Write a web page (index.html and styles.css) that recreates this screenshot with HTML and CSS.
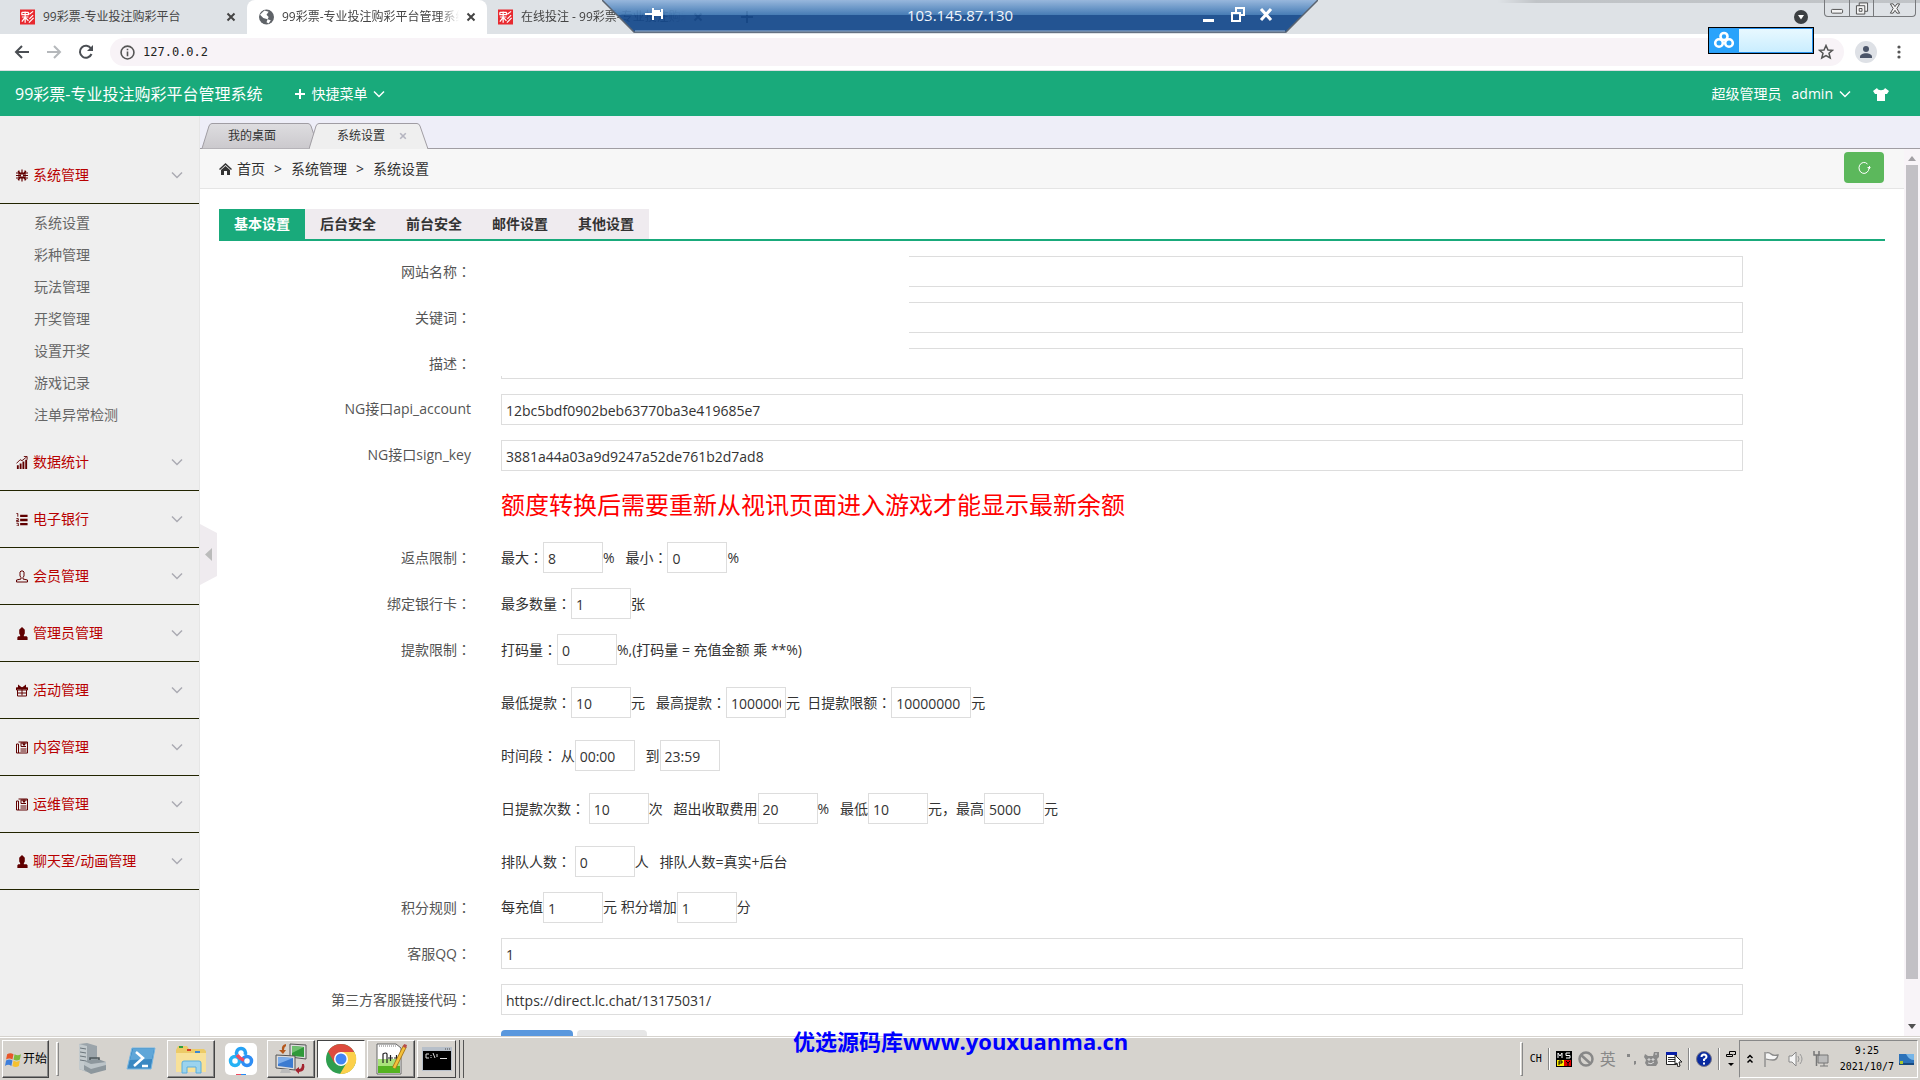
FILE: index.html
```html
<!DOCTYPE html>
<html lang="zh-CN">
<head>
<meta charset="utf-8">
<title>99彩票-专业投注购彩平台管理系统</title>
<link rel="stylesheet" href="styles.css">
</head>
<body>
<svg class="defs" aria-hidden="true">
  <symbol id="chev" viewBox="0 0 12 8"><path d="M1 1.500l5 5 5-5" fill="none" stroke="currentColor" stroke-width="1.500"/></symbol>
  <symbol id="close" viewBox="0 0 10 10"><path d="M1.500 1.500l7 7M8.500 1.500l-7 7" stroke="currentColor" stroke-width="2"/></symbol>
  <symbol id="person" viewBox="0 0 12 14"><path d="M6 0l2 2 1 1v4L8 9v1h3l1 1v3H1v-3l1-1h2V9L3 7V3l1-1z" fill="currentColor"/></symbol>
  <symbol id="news" viewBox="0 0 12 12"><path d="M2.500.5h9v11h-11v-9h2v9M5 1v4h5M7 1v2h2V1M4.500 7.500h6M4.500 9.500h6M5 1.500h6M8 1v4" fill="none" stroke="currentColor"/></symbol>
  <symbol id="lot" viewBox="0 0 16 16"><path d="M0 0h16v16H0z" fill="#e8292f"/><path d="M2 3h7M2 5.500h7M2 3v3M5.500 2v4M9 3v3M2 8h7M5.500 6v8M5 9l-3 4M6 9l3 3M14 2l-4 3M14 6l-4 4M14.500 9l-5 5" stroke="#fff" stroke-width="1.300" fill="none"/></symbol>
</svg>

<header class="browser">
  <div class="tabs">
    <div class="tab"><svg class="fav"><use href="#lot"/></svg><span class="tab-text">99彩票-专业投注购彩平台</span><svg class="x"><use href="#close"/></svg></div>
    <div class="tab current"><svg class="fav" viewBox="0 0 14 14"><circle cx="7" cy="7" r="7" fill="#5f6368"/><path d="M5 1l4 1-2 3 2 2-1 2-4-1-3-3M8 9l3 1-2 3-2-1z" fill="#fff"/></svg><span class="tab-text">99彩票-专业投注购彩平台管理系统</span><svg class="x"><use href="#close"/></svg></div>
    <div class="tab last"><svg class="fav"><use href="#lot"/></svg><span class="tab-text">在线投注 - 99彩票-专业投注购彩</span><svg class="x"><use href="#close"/></svg></div>
    <svg class="new-tab" viewBox="0 0 12 12"><path d="M6 0v12M0 6h12" stroke="#444" stroke-width="2"/></svg>
    <svg class="more-tabs" viewBox="0 0 14 14"><circle cx="7" cy="7" r="7" fill="#3c4043"/><path d="M4 5h6L7 9.500z" fill="#fff"/></svg>
    <div class="win">
      <button aria-label="最小化"><svg viewBox="0 0 14 14"><rect x="1" y="8" width="12" height="4" rx="1"/></svg></button>
      <button aria-label="还原"><svg viewBox="0 0 14 14"><path d="M4 4V1h9v9h-3M1 4h9v9H1zM4 7h3v3H4z"/></svg></button>
      <button class="wide" aria-label="关闭"><svg viewBox="0 0 14 14"><path d="M2 2h3l2 3 2-3h3L9 7l3 5H9L7 9l-2 3H2l3-5z"/></svg></button>
    </div>
  </div>
  <div class="toolbar">
    <svg viewBox="0 0 16 16" class="nav"><path d="M15 8H2M8 2L2 8l6 6" fill="none" stroke="#4a4e53" stroke-width="2"/></svg>
    <svg viewBox="0 0 16 16" class="nav"><path d="M1 8h13M8 2l6 6-6 6" fill="none" stroke="#b5b8bb" stroke-width="2"/></svg>
    <svg viewBox="0 0 16 16" class="nav"><path d="M13.500 10A6 6 0 1 1 13 4.500" fill="none" stroke="#4a4e53" stroke-width="2"/><path d="M15 1v6H9z" fill="#4a4e53"/></svg>
    <div class="address">
      <svg viewBox="0 0 14 14" class="info"><circle cx="7" cy="7" r="6" fill="none" stroke="#555" stroke-width="1.500"/><path d="M7 6v4.500M7 3.500V5" stroke="#555" stroke-width="1.500"/></svg>
      <input type="text" aria-label="地址" value="127.0.0.2">
      <svg viewBox="0 0 16 16" class="star"><path d="M8 1.500l2 4.500 4.500.3-3.500 3 1.200 4.700L8 11.500 3.800 14 5 9.300l-3.500-3L6 6z" fill="none" stroke="#555" stroke-width="1.500"/></svg>
    </div>
    <svg viewBox="0 0 22 22" class="avatar"><circle cx="11" cy="11" r="11" fill="#dee1e6"/><circle cx="11" cy="8" r="3" fill="#4a5468"/><path d="M5 16c0-5 12-5 12 0v1H5z" fill="#4a5468"/></svg>
    <svg viewBox="0 0 4 16" class="dots"><circle cx="2" cy="3" r="1.600"/><circle cx="2" cy="8" r="1.600"/><circle cx="2" cy="13" r="1.600"/></svg>
  </div>
  <div class="netdisk"><svg viewBox="0 0 30 24"><path d="M0 0h30v24H0z" fill="#2aa3fb"/><g fill="none" stroke="#fff" stroke-width="2.600"><circle cx="15" cy="8" r="3.500"/><circle cx="10" cy="14.500" r="3.800"/><circle cx="20" cy="14.500" r="3.800"/></g></svg></div>
  <div class="remote">
    <svg viewBox="0 0 716 33" preserveAspectRatio="none">
      <defs><linearGradient id="rg" x1="0" y1="0" x2="0" y2="1"><stop offset="0" stop-color="#92b4dc"/><stop offset="1" stop-color="#3a74b2"/></linearGradient></defs>
      <g opacity=".92"><path d="M15 15h686L684 32.500H32z" fill="#14488b"/><path d="M0 0h716l-15 15H15z" fill="url(#rg)"/></g><path d="M0 0l32 32h652l32-32" fill="none" stroke="#5b6470" stroke-width="1.500"/><path d="M33 31h650" stroke="#9bb5d6"/>
      <g fill="#fff"><path d="M43 13h8v2h-8zM50 8h2v12h-2zM52 10h6v2h1V9h2v10h-2v-3h-7z"/><path d="M601 19h11v3h-11z"/></g>
      <path d="M634 12V8h8v7h-3M630 13h8v8h-8z" fill="none" stroke="#fff" stroke-width="2"/><path d="M659 9l10 11M669 9l-10 11" stroke="#fff" stroke-width="3"/>
    </svg>
    <span>103.145.87.130</span>
  </div>
</header>

<header class="app-bar">
  <h1>99彩票-专业投注购彩平台管理系统</h1>
  <button class="quick"><svg class="plus" viewBox="0 0 10 10"><path d="M5 0v10M0 5h10" stroke="#fff" stroke-width="2"/></svg>快捷菜单<svg class="chev"><use href="#chev"/></svg></button>
  <div class="user"><span>超级管理员</span><button>admin<svg class="chev"><use href="#chev"/></svg></button>
  <svg class="shirt" viewBox="0 0 16 14"><path d="M4 1c1 3 7 3 8 0l4 3-2 3h-2v7H4V7H2L0 4z" fill="#fff"/></svg></div>
</header>

<div class="shell">
  <aside>
    <button class="head"><svg viewBox="0 0 12 12"><path d="M6 0v12M0 6h12M2 1.500l8 9M10 1.500l-8 9M3 1v10M9 1v10M0 3.500h12M0 8.500h12" stroke="currentColor" stroke-width="1.200"/><path d="M5 5h2v2H5z" fill="#eee"/></svg>系统管理<svg class="chev"><use href="#chev"/></svg></button>
    <ul>
      <li><a href="#">系统设置</a></li><li><a href="#">彩种管理</a></li><li><a href="#">玩法管理</a></li><li><a href="#">开奖管理</a></li><li><a href="#">设置开奖</a></li><li><a href="#">游戏记录</a></li><li><a href="#">注单异常检测</a></li>
    </ul>
    <button class="head"><svg viewBox="0 0 12 14"><path d="M1.500 14v-4M4.500 14V8M7.500 14V6M10.500 14V4" stroke="currentColor" stroke-width="2"/><path d="M0 8l4-4 2 1 5-4M8 .5h3.500V4" fill="none" stroke="currentColor"/></svg>数据统计<svg class="chev"><use href="#chev"/></svg></button>
    <button class="head"><svg viewBox="0 0 12 14"><path d="M4 3h8M4 7.500h8M4 12h8" stroke="currentColor" stroke-width="2.500"/><path d="M0 .5h1.500V4M0 6h2v2H0v1h3M0 11h2v3H0" fill="none" stroke="currentColor"/></svg>电子银行<svg class="chev"><use href="#chev"/></svg></button>
    <button class="head"><svg viewBox="0 0 12 12"><path d="M4 1.500L5 .5h2l1 1v4L7 7v1.500l4.500 1v2H.5v-2l4.500-1V7L4 5.500z" fill="none" stroke="currentColor"/></svg>会员管理<svg class="chev"><use href="#chev"/></svg></button>
    <button class="head"><svg><use href="#person"/></svg>管理员管理<svg class="chev"><use href="#chev"/></svg></button>
    <button class="head"><svg viewBox="0 0 12 12"><path d="M.5 3.500h11v2H.5zM1.500 5.500v6h9v-6M6 3v8M1.500 8.500h9" fill="none" stroke="currentColor"/><path d="M0 3h12v2H0zM2 0l4 3 4-3v3H2z" fill="currentColor"/></svg>活动管理<svg class="chev"><use href="#chev"/></svg></button>
    <button class="head"><svg><use href="#news"/></svg>内容管理<svg class="chev"><use href="#chev"/></svg></button>
    <button class="head"><svg><use href="#news"/></svg>运维管理<svg class="chev"><use href="#chev"/></svg></button>
    <button class="head"><svg><use href="#person"/></svg>聊天室/动画管理<svg class="chev"><use href="#chev"/></svg></button>
  </aside>

  <main>
    <button class="collapse" aria-label="收起菜单"><svg viewBox="0 0 17 61"><path d="M0 0l17 9v43L0 61z" fill="#efebef"/><path d="M12 24v13L5 30.500z" fill="#bbb"/></svg></button>
    <div class="page-tabs">
      <div class="page-tab first"><svg viewBox="0 0 116 26" preserveAspectRatio="none"><defs><linearGradient id="tg" x1="0" y1="0" x2="0" y2="1"><stop offset="0" stop-color="#dedde0"/><stop offset="1" stop-color="#cbc9cd"/></linearGradient></defs><path d="M0 25.500h2L9 3q1-2.500 3-2.500h96q2 0 3 2.500l5 15-3 7.500" fill="url(#tg)" stroke="#a09da3"/></svg><span>我的桌面</span></div>
      <div class="page-tab"><svg viewBox="0 0 120 26" preserveAspectRatio="none"><path d="M0 26L7 3q1-2.500 3-2.500h98q2 0 3 2.500l8 23" fill="#efefef" stroke="#a09da3"/></svg><span>系统设置</span><svg class="tx"><use href="#close"/></svg></div>
    </div>
    <div class="frame">
      <div class="page">
        <nav class="crumbs">
          <svg viewBox="0 0 13 13"><path d="M6.500 1L13 7l-1 1-5.500-5L1 8 0 7zM2 8l4.500-4L11 8v5H8V9H5v4H2z" fill="#333"/></svg><a href="#">首页</a><span>&gt;</span><a href="#">系统管理</a><span>&gt;</span><a href="#">系统设置</a>
          <button aria-label="刷新"><svg viewBox="0 0 14 14"><path d="M12 7A5 5.500 0 1 1 10.500 3M12.500 5v3M10.500 6.500h3" fill="none" stroke="#fff"/></svg></button>
        </nav>
        <form>
          <div class="form-tabs"><button type="button" class="on">基本设置</button><button type="button">后台安全</button><button type="button">前台安全</button><button type="button">邮件设置</button><button type="button">其他设置</button></div>
          <div class="rows">
            <div class="veil"></div>
            <div class="row"><label for="f1">网站名称<span class="c" lang="zh-TW">：</span></label><input id="f1" type="text"></div>
            <div class="row"><label for="f2">关键词<span class="c" lang="zh-TW">：</span></label><input id="f2" type="text"></div>
            <div class="row"><label for="f3">描述<span class="c" lang="zh-TW">：</span></label><input id="f3" type="text"></div>
            <div class="row"><label for="f4">NG接口api_account</label><input id="f4" type="text" value="12bc5bdf0902beb63770ba3e419685e7"></div>
            <div class="row"><label for="f5">NG接口sign_key</label><input id="f5" type="text" value="3881a44a03a9d9247a52de761b2d7ad8"></div>
            <div class="row"><p class="notice">额度转换后需要重新从视讯页面进入游戏才能显示最新余额</p></div>
            <div class="row"><label for="f6">返点限制<span class="c" lang="zh-TW">：</span></label><div class="line">最大<span class="c" lang="zh-TW">：</span><input id="f6" type="text" value="8">%&nbsp;&nbsp; 最小<span class="c" lang="zh-TW">：</span><input type="text" aria-label="最小" value="0">%</div></div>
            <div class="row"><label for="f7">绑定银行卡<span class="c" lang="zh-TW">：</span></label><div class="line">最多数量<span class="c" lang="zh-TW">：</span><input id="f7" type="text" value="1">张</div></div>
            <div class="row"><label for="f8">提款限制<span class="c" lang="zh-TW">：</span></label><div class="stack">
              <div class="line">打码量<span class="c" lang="zh-TW">：</span><input id="f8" type="text" value="0">%,(打码量 = 充值金额 乘 **%)</div>
              <div class="line">最低提款<span class="c" lang="zh-TW">：</span><input type="text" aria-label="最低提款" value="10">元&nbsp;&nbsp; 最高提款<span class="c" lang="zh-TW">：</span><input type="text" aria-label="最高提款" value="1000000">元&nbsp; 日提款限额<span class="c" lang="zh-TW">：</span><input class="mid" type="text" aria-label="日提款限额" value="10000000">元</div>
              <div class="line">时间段<span class="c" lang="zh-TW">：</span> 从<input type="text" aria-label="从" value="00:00">&nbsp;&nbsp; 到<input type="text" aria-label="到" value="23:59"></div>
              <div class="line">日提款次数<span class="c" lang="zh-TW">：</span> <input type="text" aria-label="日提款次数" value="10">次&nbsp;&nbsp; 超出收取费用<input type="text" aria-label="超出收取费用" value="20">%&nbsp;&nbsp; 最低<input type="text" aria-label="最低" value="10">元，最高<input type="text" aria-label="最高" value="5000">元</div>
              <div class="line">排队人数<span class="c" lang="zh-TW">：</span> <input type="text" aria-label="排队人数" value="0">人&nbsp;&nbsp; 排队人数=真实+后台</div>
            </div></div>
            <div class="row"><label for="f9">积分规则<span class="c" lang="zh-TW">：</span></label><div class="line">每充值<input id="f9" type="text" value="1">元 积分增加<input type="text" aria-label="积分增加" value="1">分</div></div>
            <div class="row"><label for="f10">客服QQ<span class="c" lang="zh-TW">：</span></label><input id="f10" type="text" value="1"></div>
            <div class="row"><label for="f11">第三方客服链接代码<span class="c" lang="zh-TW">：</span></label><input id="f11" type="text" value="https://direct.lc.chat/13175031/"></div>
            <div class="row"><div class="actions"><button type="button" class="save" aria-label="保存"></button><button type="button" class="cancel" aria-label="取消"></button></div></div>
          </div>
        </form>
      </div>
      <div class="scroll"><svg viewBox="0 0 8 5"><path d="M4 0l4 5H0z" fill="#a3a0a5"/></svg><i></i><svg viewBox="0 0 8 5"><path d="M4 5L0 0h8z" fill="#505050"/></svg></div>
    </div>
  </main>
</div>

<footer class="taskbar">
  <div class="watermark">优选源码库www.youxuanma.cn</div>
  <button class="start"><svg viewBox="0 0 16 16"><path d="M2 3q3-2 6 0L7 8Q4 6 1 8z" fill="#e8562a"/><path d="M9 3q3 2 6 0l-1 5q-3 2-6 0z" fill="#7dba3c"/><path d="M1 9q3-2 6 0l-1 5q-3-2-6 0z" fill="#3d7edb"/><path d="M8 9q3 2 6 0l-1 5q-3 2-6 0z" fill="#f5c130"/></svg>开始</button>
  <i class="sep"></i>
  <div class="apps">
    <button aria-label="服务器管理器"><svg viewBox="0 0 32 32"><path d="M4 1l8-1 10 3v22l-10 4-8-3z" fill="#9ba4aa"/><path d="M4 1l8 2v26l-8-3z" fill="#c3cacd"/><path d="M5 5l6 1M5 9l6 1M5 13l6 1M5 17l6 1" stroke="#6b757b"/><path d="M9 18l14-2 8 3v8l-15 4-7-4z" fill="#8d979d"/><path d="M9 18l7 3 15-2v3l-15 4-7-4z" fill="#bcc4c8"/><path d="M15 17v-2h9v2" fill="none" stroke="#4c555a" stroke-width="1.500"/></svg></button>
    <button aria-label="PowerShell"><svg viewBox="0 0 32 32"><path d="M7 5h23l-4 21H2z" fill="#3a88c2" stroke="#79b7e2"/><path d="M8 6h21l-2 10L5 17z" fill="#5fa6d8"/><path d="M11 9l7 6-9 8M17 23h6" fill="none" stroke="#fff" stroke-width="2.500"/></svg></button>
    <button class="up" aria-label="资源管理器"><svg viewBox="0 0 32 32"><path d="M1 7l2-4h9l2 3h15l2 2v21H1z" fill="#eccb68"/><path d="M1 10h30v19H1z" fill="#f8e199"/><path d="M4 3h4v2H4z" fill="#2f9f3f"/><path d="M12 6h4v2h-4z" fill="#d63c24"/><path d="M20 8h5v2h-5z" fill="#3c87cf"/><path d="M7 30V20q0-2 2-2h15q2 0 2 2v10h-5v-6h-9v6z" fill="#9bd3ee" stroke="#5aaede"/></svg></button>
    <button aria-label="网盘"><svg viewBox="0 0 32 32"><rect width="32" height="32" rx="5" fill="#fff"/><g fill="none" stroke-width="3.500"><circle cx="10" cy="18" r="4.500" stroke="#25b2f5"/><circle cx="22" cy="18" r="4.500" stroke="#2f8ef5"/><path d="M12 12a4.500 4.500 0 1 1 8 0" stroke="#25a2f5"/><path d="M12 12q3 4 7 5" stroke="#f04b62"/></g><path d="M11 31h5v1h-5z" fill="#f04b62"/><path d="M16 31h5v1h-5z" fill="#258df5"/></svg></button>
    <button class="up" aria-label="远程桌面"><svg viewBox="0 0 32 32"><path d="M15 1l16 1v14l-16-2z" fill="#ddd" stroke="#555"/><path d="M17 3l12 1v10l-12-1z" fill="#2f9939"/><path d="M17 3l12 1-12 6z" fill="#6fc070"/><path d="M1 12l19 1v14L1 25z" fill="#ddd" stroke="#555"/><path d="M3 14l15 1v10L3 23z" fill="#3c7bd0"/><path d="M3 14l15 1-15 6z" fill="#7eaeea"/><path d="M7 26h7l2 4H5z" fill="#bbb"/><path d="M11 1Q6 2 7 7l-3 0 4 4 3-4H9q0-3 2-4z" fill="#b5581d"/><path d="M29 21q2 7-5 8v2l-4-4 4-3v2q3 0 3-5z" fill="#a42430"/></svg></button>
    <button class="active" aria-label="Chrome"><svg viewBox="0 0 32 32"><circle cx="16" cy="16" r="15" fill="#2f9e4f"/><path d="M16 16L3 8.500A15 15 0 0 1 29 8.500z" fill="#dd4b3e"/><path d="M16 9h13.400A15 15 0 0 1 15 31l7-12z" fill="#fcd04b"/><path d="M3 8.500L9.500 20 16 9h13z" fill="#dd4b3e"/><circle cx="16" cy="16" r="7" fill="#fff"/><circle cx="16" cy="16" r="5.500" fill="#4285f4"/></svg></button>
    <button class="up" aria-label="Notepad++"><svg viewBox="0 0 32 32"><path d="M2 1h19l5 4v26H2z" fill="#fff" stroke="#666"/><path d="M3 16h22v14H3z" fill="#a9e27a"/><path d="M3 23h22v7H3z" fill="#54b320"/><path d="M4 3h17" stroke="#777" stroke-dasharray="1 1"/><path d="M8 20v-9q3-2 4 0v9M13 15h5M15.500 12v6M19 15h5M21.500 12v6" stroke="#222" fill="none" stroke-width="1.200"/><path d="M30 3L19 25" stroke="#a67619" stroke-width="4"/><path d="M30 3L19 25" stroke="#f4c13a" stroke-width="2.500"/><path d="M29 1l3 1-1 3-3-1z" fill="#b64b4b"/></svg></button>
    <button class="up stackd" aria-label="命令提示符"><svg viewBox="0 0 32 32"><path d="M1 4h30v24H1z" fill="#b7bfc9"/><path d="M2 8h28v19H2z" fill="#000"/><path d="M24 6h5" stroke="#444" stroke-dasharray="1 1"/><path d="M8 11H5v4h3M10 12v1M10 14v1M12 10l2 5M16 11v3M19 15.500h7" stroke="#ddd" fill="none"/></svg></button>
  </div>
  <div class="lang">
    <i class="sep"></i><span class="ch">CH</span><i class="bar"></i>
    <svg viewBox="0 0 16 16"><path d="M0 0h16v16H0z" fill="#000"/><path d="M1 9h7v6H1z" fill="#ffec00"/><path d="M8 9h7v6H8z" fill="#e00000"/><path d="M2 7V2l2 3 2-3v5M14 2h-4v2.500h4V7h-4" stroke="#fff" fill="none"/><path d="M3 14v-4h3v2H3M10 10l2 2 2-2M12 12v3" stroke="#000" fill="none"/></svg>
    <svg viewBox="0 0 16 16"><circle cx="8" cy="8" r="6.500" fill="none" stroke="#888" stroke-width="2.500"/><path d="M3 4l10 9" stroke="#888" stroke-width="2.500"/></svg>
    <span class="ime">英</span>
    <svg viewBox="0 0 16 16"><path d="M5 3h3v3H5zM12 10h2v3l-2 1z" fill="#888"/></svg>
    <svg viewBox="0 0 16 16"><path d="M1 3l3 2h5l1-4 5 0v5l-2 2 1 4-2 3H3l-2-3 1-3-2-3z" fill="#8a8a8a"/><path d="M4 8h2v1H4zM8 8h2v1H8zM4 12q3 2 6-1M11 3h2" stroke="#ddd" fill="none"/></svg>
    <svg viewBox="0 0 16 16"><path d="M.5 1.500h10v12H.5z" fill="#fff" stroke="#222"/><path d="M0 1h11v3H0z" fill="#0a1fa8"/><path d="M2 6.500h7M2 8.500h7M2 10.500h7" stroke="#333"/><path d="M9 4l7 7h-3l1 4-2 1-1-4-2 1z" fill="#fff" stroke="#222"/></svg>
    <i class="bar"></i>
    <svg viewBox="0 0 16 16"><circle cx="8" cy="8" r="7.500" fill="#0a2ba0" stroke="#778"/><path d="M5.500 6q0-2.500 2.500-2.500T10.500 6Q10.500 7 8 8.500V10M8 11.500v2" fill="none" stroke="#fff" stroke-width="2"/></svg>
    <i class="bar"></i>
    <svg class="slim" viewBox="0 0 10 16"><path d="M3.500 3V.5h6v3h-2M.5 3.500h6v2h-6z" fill="none" stroke="#000"/><path d="M2 12h6l-3 3z"/></svg>
  </div>
  <div class="tray">
    <svg class="slim" viewBox="0 0 8 10"><path d="M1.500 4L4 1.500 6.500 4M1.500 8.500L4 6l2.500 2.500" fill="none" stroke="#000" stroke-width="1.500"/></svg>
    <svg viewBox="0 0 16 16"><path d="M2 1v15M3 2q3-1 5 1t7 1q-1 5-5 5T3 8" fill="#f5f5f5" stroke="#888" stroke-width="1.300"/></svg>
    <svg viewBox="0 0 16 16"><path d="M1 5h3l4-4v14l-4-4H1z" fill="#f5f5f5" stroke="#888"/><path d="M10 5q2 3 0 6M12 3q4 5 0 10" fill="none" stroke="#999"/></svg>
    <svg viewBox="0 0 16 16"><path d="M5 4h10v8H5zM7 15h8M11 12v3" fill="#bbb" stroke="#777"/><path d="M1 0v4h5V0M3.500 4v11" fill="none" stroke="#777" stroke-width="1.500"/></svg>
    <time>9:25<br>2021/10/7</time>
    <svg viewBox="0 0 16 16"><path d="M0 3h15v10H0z" fill="#2c72b9"/><path d="M7 3h8v6q-5 0-8-6z" fill="#76b5e8"/><path d="M0 12h15v2H0z" fill="#174a80"/><path d="M1 10h3v3H1z" fill="#a9c72e"/></svg>
  </div>
</footer>
</body>
</html>
```
FILE: styles.css
```css
* { box-sizing: border-box; }
body {
  margin: 0;
  height: 100vh;
  display: flex;
  flex-direction: column;
  overflow: hidden;
  font: 14px/20px "Open Sans", "Noto Sans CJK SC", sans-serif;
  color: #333;
  background: #fff;
}
button { font: inherit; color: inherit; background: none; border: 0; padding: 0; margin: 0; }
input { font: inherit; color: inherit; }
a { color: inherit; text-decoration: none; }
svg { display: block; flex: none; }
.defs { position: absolute; width: 0; height: 0; }
.chev { width: 12px; height: 8px; }

/* browser window */
.browser { position: relative; flex: none; }
.tabs { display: flex; height: 34px; background: linear-gradient(to right, transparent 78%, #0002 80%) top / 100% 3px no-repeat, #dee2e6; }
.tab { display: flex; align-items: center; width: 247px; padding: 0 11px 0 20px; font-size: 12px; color: #444; }
.tab.current { width: 240px; background: #fff; border-radius: 8px 8px 0 0; padding: 0 11px 0 12px; }
.tab.last { width: 228px; padding: 0 12px 0 11px; }
.fav { width: 15px; height: 16px; margin-right: 8px; }
.tab-text { flex: 1; overflow: hidden; white-space: nowrap; }
.current .tab-text, .last .tab-text { mask-image: linear-gradient(to left, transparent, #000 20px); }
.tab .x { width: 10px; height: 10px; margin-left: 7px; }
.new-tab { width: 12px; height: 12px; margin: 11px 0 0 26px; }
.more-tabs { width: 14px; height: 14px; margin: 10px 16px 0 auto; }
.win { display: flex; height: 17px; margin-right: 4px; border: 1px solid #77797c; border-top: 0; border-radius: 0 0 4px 4px; }
.win button { display: grid; place-items: center; width: 24px; }
.win button + button { border-left: 1px solid #77797c; }
.win .wide { width: 42px; }
.win svg { width: 14px; height: 13px; fill: #f3f3f3; stroke: #4b4b4b; }
.toolbar { display: flex; align-items: center; height: 37px; padding: 0 19px 0 14px; border-bottom: 1px solid #dcdfe2; background: #fff; }
.nav { width: 16px; height: 16px; margin-right: 16px; }
.address { display: flex; align-items: center; flex: 1; height: 28px; margin-right: 11px; padding: 0 10px; border-radius: 14px; background: #f8f3f7; }
.info { width: 15px; height: 15px; }
.address input { flex: 1; border: 0; background: none; padding: 0 8px; font: 12px/16px "DejaVu Sans Mono", monospace; color: #222; }
.star { width: 16px; height: 16px; }
.avatar { width: 22px; height: 22px; margin-right: 20px; }
.dots { width: 4px; height: 16px; fill: #555; }
.netdisk { position: absolute; right: 106px; top: 27px; width: 106px; height: 27px; border: 1px solid #000; background: linear-gradient(#e9f9ff, #c9edff); box-shadow: inset 0 0 0 1px #2a94f0; }
.netdisk svg { width: 30px; height: 25px; }
.remote { position: absolute; left: 602px; right: 602px; top: 0; height: 33px; }
.remote svg { position: absolute; width: 100%; height: 33px; }
.remote span { position: relative; display: block; text-align: center; font-size: 15px; line-height: 31px; color: #f2f6fb; }

/* application bar */
.app-bar { display: flex; align-items: center; flex: none; height: 45px; padding: 0 31px 0 15px; background: #19aa7b; color: #fff; }
.app-bar h1 { margin: 0 33px 0 0; font-size: 16px; line-height: 20px; font-weight: 400; }
.app-bar button { display: flex; align-items: center; gap: 6px; }
.plus { width: 10px; height: 10px; }
.user { display: flex; align-items: center; gap: 10px; margin-left: auto; }
.shirt { width: 16px; height: 14px; margin-left: 12px; }

.shell { display: flex; flex: 1; min-height: 0; }
aside { flex: none; width: 200px; padding-top: 31px; border-right: 1px solid #e6e6e6; background: #efefef; overflow: hidden; }
.head { display: flex; align-items: center; gap: 5px; width: 100%; height: 57px; padding: 0 16px; border-bottom: 1px solid #222400; color: #b80000; }
.head svg { width: 12px; height: 13px; color: #600000; }
.head .chev { width: 12px; height: 8px; margin-left: auto; color: #aaaab2; }
aside ul { list-style: none; margin: 0; padding: 3px 0 3px 34px; }
aside li { line-height: 32px; color: #666; }

main { position: relative; display: flex; flex-direction: column; flex: 1; min-width: 0; }
.collapse { position: absolute; left: 0; top: 408px; width: 17px; height: 61px; }
.page-tabs { display: flex; align-items: flex-end; flex: none; height: 33px; border-bottom: 1px solid #a09da3; background: #eeeef8; }
.page-tab { position: relative; display: flex; align-items: center; width: 120px; height: 26px; margin-bottom: -1px; padding-left: 28px; font-size: 12px; }
.page-tab.first { width: 116px; margin-right: -7px; }
.page-tab > svg:first-child { position: absolute; left: 0; top: 0; width: 100%; height: 26px; }
.page-tab span { position: relative; }
.page-tab .tx { width: 8px; height: 8px; margin-left: 14px; color: #b5b5c0; position: relative; }
.frame { display: flex; flex: 1; min-height: 0; overflow: hidden; }
.page { flex: 1; min-width: 0; }
.scroll { display: flex; flex-direction: column; align-items: center; width: 16px; padding: 7px 0; background: #f8f4f8; }
.scroll svg { width: 8px; height: 5px; }
.scroll i { flex: 1; width: 12px; margin: 4px 0 45px; background: #c2c0c5; }

.crumbs { display: flex; align-items: center; height: 40px; padding: 0 20px 0 19px; border-bottom: 1px solid #e5e5e5; background: #f7f7f7; }
.crumbs > svg { width: 13px; height: 13px; margin-right: 5px; }
.crumbs span { width: 26px; text-align: center; }
.crumbs button { display: grid; place-items: center; width: 40px; height: 31px; margin: 0 0 2px auto; border-radius: 4px; background: #5cb85c; }
.crumbs button svg { width: 14px; height: 14px; }
form { padding: 20px 19px 0; }
.form-tabs { display: flex; border-bottom: 2px solid #19aa7b; }
.form-tabs button { height: 30px; padding: 0 15px; background: #efebef; font-weight: 700; }
.form-tabs .on { background: #19aa7b; color: #fff; }
.rows { position: relative; display: flex; flex-direction: column; gap: 15px; padding-top: 15px; }
.veil { position: absolute; left: 276px; top: 10px; width: 414px; height: 125px; background: #fff; }
.row { display: grid; grid-template-columns: 282fr 1242fr 142fr; }
.row > label { padding-right: 30px; line-height: 30px; text-align: right; color: #555; }
.row > :not(label) { grid-column: 2; }
.row input { height: 31px; border: 1px solid #ddd; padding: 2px 4px 0; background: #fff; }
.c { font-family: "Noto Sans CJK TC", sans-serif; }
.line { height: 31px; line-height: 30px; white-space: nowrap; }
.line input { width: 60px; vertical-align: top; }
.line .mid { width: 80px; }
.stack { display: flex; flex-direction: column; gap: 22px; }
.notice { height: 41px; margin: 0; font-size: 24px; line-height: 37px; color: #f00; }
.actions { display: flex; gap: 4px; }
.actions button { width: 72px; height: 31px; border-radius: 4px; }
.save { background: #5a98de; }
.actions .cancel { width: 70px; background: #e6e6e6; }

/* desktop taskbar */
.taskbar { position: relative; display: flex; align-items: center; flex: none; height: 44px; padding: 2px 2px 0; background: linear-gradient(#d6d3ce 1px, #fff 1px 2px, #d6d3ce 2px); color: #000; font-size: 12px; }
.watermark { position: absolute; left: 793px; top: -8px; font-size: 22px; line-height: 26px; font-weight: 700; color: #00f; white-space: nowrap; }
.start { display: flex; align-items: center; gap: 1px; width: 47px; height: 38px; padding-left: 2px; border: 1px solid; border-color: #fff #444 #444 #fff; box-shadow: inset -1px -1px #888; }
.start svg { width: 17px; height: 17px; }
.sep { width: 3px; height: 34px; margin: 0 8px 0 7px; border: 1px solid; border-color: #fff #888 #888 #fff; }
.apps { display: flex; gap: 2px; }
.apps button { display: grid; place-items: center; width: 48px; height: 38px; }
.apps svg { width: 32px; height: 32px; }
.apps .up { border: 1px solid; border-color: #fff #444 #444 #fff; box-shadow: inset -1px -1px #888; }
.apps .active { border: 1px solid; border-color: #444 #fff #fff #444; background: #fff; }
.apps .stackd { width: 39px; box-shadow: 3px 0 #d6d3ce, 4px 0 #555, 7px 0 #d6d3ce, 8px 0 #555; }
.lang { display: flex; align-items: center; gap: 6px; margin-left: auto; margin-right: 3px; }
.lang svg, .tray svg { width: 16px; height: 16px; }
.lang .sep { margin: 0 1px 0 0; }
.ch, time { font: 10px/16px "DejaVu Sans Mono", monospace; }
.bar { width: 2px; height: 22px; background: linear-gradient(to right, #888 1px, #fff 1px); }
.ime { font-size: 16px; color: #888; }
.lang .slim { width: 10px; }
.tray { display: flex; align-items: center; gap: 9px; height: 38px; padding: 0 2px 0 6px; border: 1px solid; border-color: #888 #fff #fff #888; }
.tray .slim { width: 8px; height: 10px; }
time { text-align: center; margin: 0 -4px 0 2px; }
```
